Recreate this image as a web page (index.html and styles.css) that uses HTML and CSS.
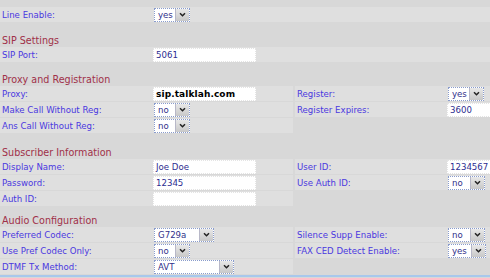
FILE: index.html
```html
<!DOCTYPE html>
<html lang="en">
<head>
<meta charset="UTF-8" />
<title>Line Settings</title>
<link rel="stylesheet" href="styles.css">
</head>
<body>

<div class="page">
  <div class="spacer"></div>
  <div class="row">
    <div class="pair wide"><span class="label">Line Enable:</span><span class="select w36"><span class="val">yes</span><span class="btn"><svg viewBox="0 0 8 6"><path d="M1 1.5 L4 4.5 L7 1.5"/></svg></span></span></div>
  </div>

  <div class="heading h24">SIP Settings</div>
  <div class="row">
    <div class="pair wide"><span class="label">SIP Port:</span><span class="input">5061</span></div>
  </div>

  <div class="heading h23">Proxy and Registration</div>
  <div class="row">
    <div class="pair"><span class="label">Proxy:</span><span class="input strong">sip.talklah.com</span></div>
    <div class="pair"><span class="label">Register:</span><span class="select w36"><span class="val">yes</span><span class="btn"><svg viewBox="0 0 8 6"><path d="M1 1.5 L4 4.5 L7 1.5"/></svg></span></span></div>
  </div>
  <div class="row">
    <div class="pair"><span class="label">Make Call Without Reg:</span><span class="select w36"><span class="val">no</span><span class="btn"><svg viewBox="0 0 8 6"><path d="M1 1.5 L4 4.5 L7 1.5"/></svg></span></span></div>
    <div class="pair"><span class="label">Register Expires:</span><span class="input">3600</span></div>
  </div>
  <div class="row">
    <div class="pair"><span class="label">Ans Call Without Reg:</span><span class="select w36"><span class="val">no</span><span class="btn"><svg viewBox="0 0 8 6"><path d="M1 1.5 L4 4.5 L7 1.5"/></svg></span></span></div>
  </div>

  <div class="heading h25">Subscriber Information</div>
  <div class="row">
    <div class="pair"><span class="label">Display Name:</span><span class="input">Joe Doe</span></div>
    <div class="pair"><span class="label">User ID:</span><span class="input">1234567</span></div>
  </div>
  <div class="row">
    <div class="pair"><span class="label">Password:</span><span class="input">12345</span></div>
    <div class="pair"><span class="label">Use Auth ID:</span><span class="select w37"><span class="val">no</span><span class="btn"><svg viewBox="0 0 8 6"><path d="M1 1.5 L4 4.5 L7 1.5"/></svg></span></span></div>
  </div>
  <div class="row">
    <div class="pair"><span class="label">Auth ID:</span><span class="input"></span></div>
  </div>

  <div class="heading h20">Audio Configuration</div>
  <div class="row">
    <div class="pair"><span class="label">Preferred Codec:</span><span class="select w60"><span class="val">G729a</span><span class="btn"><svg viewBox="0 0 8 6"><path d="M1 1.5 L4 4.5 L7 1.5"/></svg></span></span></div>
    <div class="pair"><span class="label">Silence Supp Enable:</span><span class="select w37"><span class="val">no</span><span class="btn"><svg viewBox="0 0 8 6"><path d="M1 1.5 L4 4.5 L7 1.5"/></svg></span></span></div>
  </div>
  <div class="row">
    <div class="pair"><span class="label">Use Pref Codec Only:</span><span class="select w36"><span class="val">no</span><span class="btn"><svg viewBox="0 0 8 6"><path d="M1 1.5 L4 4.5 L7 1.5"/></svg></span></span></div>
    <div class="pair"><span class="label">FAX CED Detect Enable:</span><span class="select w38"><span class="val">yes</span><span class="btn"><svg viewBox="0 0 8 6"><path d="M1 1.5 L4 4.5 L7 1.5"/></svg></span></span></div>
  </div>
  <div class="row">
    <div class="pair"><span class="label">DTMF Tx Method:</span><span class="select w80"><span class="val">AVT</span><span class="btn"><svg viewBox="0 0 8 6"><path d="M1 1.5 L4 4.5 L7 1.5"/></svg></span></span></div>
  </div>
  <div class="bottom-rule"></div>
</div>

</body>
</html>
```

FILE: styles.css
```css
html, body {
  margin: 0;
  padding: 0;
  background: #d8d8d8;
  font-family: "DejaVu Sans", Verdana, sans-serif;
  font-size: 8.6px;
}
.page {
  width: 490px;
  overflow: hidden;
}
.spacer { height: 7px; }
.heading {
  display: flex;
  align-items: flex-end;
  box-sizing: border-box;
  padding: 0 0 1px 2px;
  font-size: 9.6px;
  line-height: 11px;
  color: #a03048;
}
.heading.h20 { height: 20px; }
.heading.h23 { height: 23px; }
.heading.h24 { height: 24px; }
.heading.h25 { height: 25px; }
.row {
  display: flex;
  gap: 2px;
  height: 15px;
  margin-bottom: 1px;
}
.pair {
  display: grid;
  grid-template-columns: 153px 1fr;
  align-items: center;
  flex: none;
  width: 293px;
  background: #dfdfdf;
}
.pair + .pair {
  grid-template-columns: 152px 1fr;
  flex: 1;
  width: auto;
  min-width: 0;
}
.pair.wide { flex: 1; }
.label {
  padding-left: 2px;
  color: #4a38e0;
  white-space: nowrap;
}
.input {
  display: block;
  width: 103px;
  height: 14px;
  box-sizing: border-box;
  padding: 0 2px;
  background: #fff;
  border: 1px dotted #e4e4e4;
  color: #2c2c90;
  line-height: 12px;
  white-space: nowrap;
  overflow: hidden;
}
.pair + .pair .input { width: 60px; }
.input.strong {
  color: #000;
  font-weight: bold;
  font-size: 9px;
  letter-spacing: 0.1px;
}
.select {
  display: flex;
  height: 14px;
  box-sizing: border-box;
  border: 1px dotted #8a9ccc;
  background: #fff;
  margin-left: 1px;
}
.select.w36 { width: 36px; }
.select.w37 { width: 37px; }
.select.w38 { width: 38px; }
.select.w60 { width: 60px; }
.select.w80 { width: 80px; }
.val {
  flex: 1;
  padding-left: 3px;
  color: #30308a;
  line-height: 12px;
}
.btn {
  width: 13px;
  display: flex;
  align-items: center;
  justify-content: center;
  background: linear-gradient(#e8e8e8, #c8c8c8);
  border-left: 1px solid #b8b8c8;
}
.btn svg {
  width: 7px;
  height: 5px;
  fill: none;
  stroke: #222;
  stroke-width: 1.8;
}
.bottom-rule {
  height: 2px;
  margin-top: 1px;
  background: #a8c8ec;
}
```
